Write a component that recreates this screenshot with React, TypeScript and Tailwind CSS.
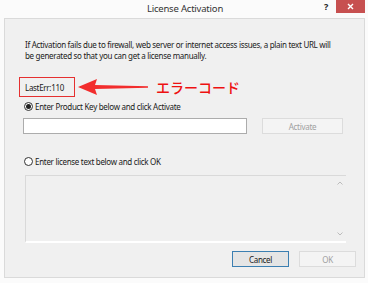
import React from "react";

function Radio({ checked }: { checked: boolean }) {
  return (
    <span className="flex h-[9px] w-[9px] items-center justify-center rounded-full border border-[#333] bg-white">
      {checked && <span className="h-[5px] w-[5px] rounded-full bg-[#222]" />}
    </span>
  );
}

export default function App() {
  return (
    <div
      className="relative h-[283px] w-[368px] overflow-hidden bg-[#fbfbfb] text-[#1a1a1a]"
      style={{ fontFamily: '"Noto Sans", "Open Sans", sans-serif' }}
    >
      {/* title bar */}
      <div className="relative flex h-[18px] items-center justify-center pl-[2px]">
        <span className="text-[9.5px] leading-none tracking-[-0.2px] text-[#333]">License Activation</span>
        <span className="absolute left-[324px] top-[2px] text-[9px] font-bold leading-none text-[#222]">?</span>
        <div className="absolute right-[3px] top-0 flex h-[13px] w-[29px] items-center justify-center bg-[#c75050]">
          <svg width="7" height="7" viewBox="0 0 7 7">
            <path d="M1 1 L6 6 M6 1 L1 6" stroke="#fff" strokeWidth="1.4" />
          </svg>
        </div>
      </div>

      {/* main panel */}
      <div className="ml-[4px] flex h-[260px] w-[361px] flex-col border border-[#dadada] bg-[#f0f0f0] text-[8px] leading-[11px] tracking-[-0.3px]">
        <p className="ml-[20px] mr-[24px] mt-[20px]">
          If Activation fails due to firewall, web server or internet access issues, a plain text URL will be
          generated so that you can get a license manually.
        </p>

        <div className="ml-[14px] mt-[16px] flex items-center">
          <div className="flex h-[20px] w-[56px] items-center border border-[#e53030] pl-[5px]">LastErr:110</div>
          <svg width="70" height="16" viewBox="0 0 70 16" className="ml-[3px]">
            <path d="M0 8 L19 0 L17 6 L70 7.3 L70 8.7 L17 10 L19 16 Z" fill="#f22d2d" />
          </svg>
          <span
            className="ml-[8px] text-[14px] font-medium leading-none tracking-normal text-[#ee1111]"
            style={{ fontFamily: '"Noto Sans CJK JP", sans-serif' }}
          >
            エラーコード
          </span>
        </div>

        <div className="ml-[19px] mt-[4px] flex items-center gap-[2px]">
          <Radio checked />
          <span>Enter Product Key below and click Activate</span>
        </div>

        <div className="ml-[18px] mt-[6px] flex items-center">
          <div className="h-[16px] w-[224px] border border-[#acacac] bg-white" />
          <div className="ml-[15px] flex h-[16px] w-[81px] items-center justify-center border border-[#dcdcdc] bg-[#f4f4f4] text-[#a0a0a0]">
            Activate
          </div>
        </div>

        <div className="ml-[19px] mt-[22px] flex items-center gap-[2px]">
          <Radio checked={false} />
          <span>Enter license text below and click OK</span>
        </div>

        <div className="ml-[20px] mt-[8px] flex h-[68px] w-[321px] border-t border-l border-[#d9d9d9] border-b-2 border-b-white">
          <div className="flex-1" />
          <div className="flex w-[13px] flex-col items-center justify-between py-[5px]">
            <svg width="6" height="4" viewBox="0 0 6 4">
              <path d="M0.5 3.5 L3 1 L5.5 3.5" fill="none" stroke="#bcbcbc" strokeWidth="1" />
            </svg>
            <svg width="6" height="4" viewBox="0 0 6 4">
              <path d="M0.5 0.5 L3 3 L5.5 0.5" fill="none" stroke="#bcbcbc" strokeWidth="1" />
            </svg>
          </div>
        </div>

        <div className="ml-[227px] mt-[8px] flex items-center gap-[10px]">
          <div className="flex h-[16px] w-[57px] items-center justify-center border border-[#3c7fb1] bg-[#e5e5e5]">
            Cancel
          </div>
          <div className="flex h-[16px] w-[57px] items-center justify-center border border-[#dcdcdc] bg-[#f4f4f4] text-[#a0a0a0]">
            OK
          </div>
        </div>
      </div>
    </div>
  );
}
